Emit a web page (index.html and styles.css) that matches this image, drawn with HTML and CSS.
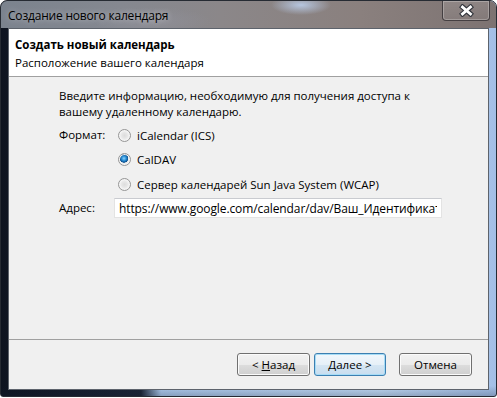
FILE: index.html
```html
<!DOCTYPE html>
<html lang="ru">
<head>
    <meta charset="UTF-8">
    <meta name="viewport" content="width=device-width, initial-scale=1.0">
    <title>Создание нового календаря</title>
    <link rel="stylesheet" href="styles.css">
</head>
<body>
    <div class="window">
        <div class="titlebar">
            <span class="title">Создание нового календаря</span>
            <button class="close-btn" type="button" title="Закрыть">
                <svg width="15" height="13" viewBox="0 0 15 13">
                    <path d="M3.5 3 L11.5 10 M11.5 3 L3.5 10" stroke="#33363d" stroke-width="5" stroke-linecap="square" fill="none"/>
                    <path d="M3.5 3 L11.5 10 M11.5 3 L3.5 10" stroke="#ffffff" stroke-width="2.8" stroke-linecap="square" fill="none"/>
                </svg>
            </button>
        </div>

        <div class="client">
            <div class="wizard-header">
                <div class="wizard-title">Создать новый календарь</div>
                <div class="wizard-desc">Расположение вашего календаря</div>
            </div>

            <div class="wizard-page">
                <p class="intro">Введите информацию, необходимую для получения доступа к<br>вашему удаленному календарю.</p>

                <div class="form">
                    <span class="field-label">Формат:</span>
                    <div class="options">
                        <label class="option"><input type="radio" name="format" value="ics"> iCalendar (ICS)</label>
                        <label class="option"><input type="radio" name="format" value="caldav" checked> CalDAV</label>
                        <label class="option"><input type="radio" name="format" value="wcap"> Сервер календарей Sun Java System (WCAP)</label>
                    </div>

                    <label class="field-label" for="address">Адрес:</label>
                    <input id="address" class="text-input" type="text" value="https://www.google.com/calendar/dav/Ваш_Идентификатор/events">
                </div>
            </div>

            <div class="wizard-buttons">
                <button class="btn" type="button">&lt; <u>Н</u>азад</button>
                <button class="btn btn-default" type="button"><u>Д</u>алее &gt;</button>
                <button class="btn btn-cancel" type="button">Отмена</button>
            </div>
        </div>
    </div>
</body>
</html>
```

FILE: styles.css
```css
body {
    margin: 0;
    background: #ffffff;
    font-family: 'Segoe UI', 'Open Sans', sans-serif;
    font-size: 11.5px;
    color: #000000;
}

/* window frame (aero glass) */
.window {
    width: 497px;
    height: 397px;
    box-sizing: border-box;
    display: flex;
    flex-direction: column;
    padding: 0 7px 6px 7px;
    border: 1px solid #262b33;
    border-radius: 7px 7px 3px 3px;
    background:
        linear-gradient(to bottom, rgba(0, 0, 0, 0) 0, rgba(0, 0, 0, 0) 385px, rgba(20, 30, 50, 0.25) 100%),
        linear-gradient(to right, #0e1420 0, #1b2536 140px, #aecbee 160px, #c2dbf6 380px, #a3bfe6 100%);
    overflow: hidden;
}

.titlebar {
    display: flex;
    align-items: flex-start;
    height: 27px;
    margin: 0 -7px;
    padding: 0 6px 0 7px;
    background:
        radial-gradient(ellipse 30px 10px at 300px 4px, rgba(190, 210, 240, 0.85), rgba(190, 210, 240, 0) 100%),
        radial-gradient(ellipse 60px 14px at 150px 20px, rgba(150, 150, 160, 0.5), rgba(150, 150, 160, 0) 100%),
        linear-gradient(to right, #7b838e 0, #858890 120px, #8b8789 220px, #8a807e 360px, #7d7372 100%);
}

.title {
    padding-top: 6px;
    line-height: 18px;
    font-size: 12px;
    letter-spacing: -0.2px;
    color: #000000;
    text-shadow: 0 0 6px rgba(255, 255, 255, 0.55);
}

.close-btn {
    margin-left: auto;
    width: 48px;
    height: 20px;
    padding: 0;
    border: 1px solid rgba(45, 40, 45, 0.75);
    border-top: none;
    border-radius: 0 0 4px 4px;
    background: linear-gradient(to bottom, rgba(255, 255, 255, 0.12), rgba(255, 255, 255, 0.04));
    box-shadow: inset 0 0 0 1px rgba(255, 255, 255, 0.25);
    display: flex;
    align-items: center;
    justify-content: center;
}

.close-btn svg {
    display: block;
}

/* client area */
.client {
    flex: 1;
    display: flex;
    flex-direction: column;
    border: 1px solid #5d636c;
    background: #f0f0f0;
}

.wizard-header {
    height: 48px;
    box-sizing: border-box;
    padding: 7px 6px 0 6px;
    background: #ffffff;
    border-bottom: 1px solid #a0a0a0;
    line-height: 18px;
}

.wizard-title {
    font-weight: bold;
}

.wizard-page {
    flex: 1;
    padding: 11px 0 0 50px;
}

.intro {
    margin: 0;
    line-height: 16px;
}

.form {
    display: grid;
    grid-template-columns: 55px 330px;
    align-items: center;
    row-gap: 5px;
    margin-top: 6px;
}

.field-label {
    line-height: 18px;
}

.form > .field-label:first-child {
    align-self: start;
}

.options {
    display: flex;
    flex-direction: column;
    gap: 6.5px;
    padding-left: 4px;
}

.option {
    display: flex;
    align-items: center;
    gap: 6px;
    height: 18px;
    white-space: nowrap;
}

.option input {
    appearance: none;
    -webkit-appearance: none;
    width: 13px;
    height: 13px;
    margin: 0;
    border: 1px solid #969696;
    border-radius: 50%;
    box-sizing: border-box;
    background: radial-gradient(circle at 50% 50%, #dcdcdc 0, #e6e6e6 35%, #f6f6f6 70%, #ffffff 100%);
    box-shadow: inset 0 0 0 1px #f4f4f4;
}

.option input:checked {
    background:
        radial-gradient(circle at 45% 40%, #8fd4ff 0, #2a8fd6 25%, #0b4f8e 45%, rgba(11, 79, 142, 0) 50%),
        radial-gradient(circle at 50% 50%, #dcdcdc 0, #e6e6e6 35%, #f6f6f6 70%, #ffffff 100%);
}

.text-input {
    width: 328px;
    height: 20px;
    box-sizing: border-box;
    margin: 0;
    padding: 0 4px;
    border: 1px solid #e3e3e3;
    border-top-color: #c9cbd0;
    background: #ffffff;
    font: inherit;
    font-size: 12px;
    letter-spacing: -0.1px;
    color: #000000;
    outline: none;
}

/* buttons */
.wizard-buttons {
    display: flex;
    justify-content: flex-end;
    align-items: flex-start;
    height: 50px;
    box-sizing: border-box;
    padding: 13px 16px 0 0;
    border-top: 1px solid #a0a0a0;
}

.btn {
    width: 73px;
    height: 23px;
    padding: 0;
    margin-left: 4px;
    border: 1px solid #707070;
    border-radius: 3px;
    background: linear-gradient(to bottom, #f2f2f2 0%, #ebebeb 50%, #dddddd 51%, #cfcfcf 100%);
    box-shadow: inset 0 0 0 1px #fbfbfb;
    font: inherit;
    color: #000000;
}

.btn-default {
    width: 72px;
    border-color: #3c7fb1;
    background: linear-gradient(to bottom, #f1f7fc 0%, #e6f0f8 50%, #d5e6f3 51%, #c8ddef 100%);
    box-shadow: inset 0 0 0 1px #a6dcf6;
}

.btn-cancel {
    margin-left: 13px;
}
```
